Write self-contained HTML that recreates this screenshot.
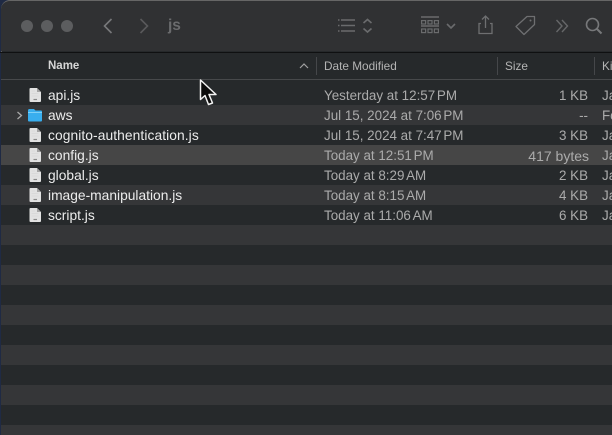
<!DOCTYPE html>
<html><head><meta charset="utf-8">
<style>
html,body{margin:0;padding:0;background:#2a2d3a;}
#w{position:relative;width:612px;height:435px;overflow:hidden;background:#1f2a44;font-family:"Liberation Sans",sans-serif;filter:blur(.3px);}
#win{position:absolute;left:1px;top:1px;width:640px;height:440px;border-radius:9px;overflow:hidden;background:#26292b;box-shadow:inset 0 0 0 1px #5a5a5c;}
#tb{position:absolute;left:0;top:0;right:0;height:51px;background:#303133;border-top:1px solid #666;box-sizing:border-box;}
#ln{position:absolute;left:0;right:0;top:51px;height:1px;background:#0f1011;}
.r{position:absolute;left:1px;width:640px;height:20px;}
.l{background:#353638;}
.s{background:#464646;}
.t{position:absolute;font-size:13.4px;line-height:20px;white-space:nowrap;margin-top:1px;}
.n{left:48px;color:#ececec;font-size:13.8px;}
.d{left:324px;color:#ababab;}
.d i{font-style:normal;margin-left:-2px;}
.z{right:24px;color:#ababab;text-align:right;}
.k{left:602px;color:#ababab;}
.h{position:absolute;top:56px;font-size:11.8px;line-height:20px;color:#b4b4b4;white-space:nowrap;}
.sep{position:absolute;top:57px;height:18px;width:1px;background:#45474a;}
svg{position:absolute;left:0;top:0;overflow:visible;}
</style></head><body>
<div id="w">
<div id="win"></div>
<div id="tb" style="left:1px;width:640px;position:absolute;border-radius:9px 0 0 0;"></div>
<div id="ln" style="position:absolute;top:52px;"></div>
<div style="position:absolute;left:1px;top:53px;width:640px;height:382px;background:#26292b;"></div>
<div style="position:absolute;left:1px;top:79px;width:640px;height:1px;background:#47494b;"></div>

<div class="r l" style="top:105px"></div>
<div class="r s" style="top:145px"></div>
<div class="r l" style="top:185px"></div>
<div class="r l" style="top:225px"></div>
<div class="r l" style="top:265px"></div>
<div class="r l" style="top:305px"></div>
<div class="r l" style="top:345px"></div>
<div class="r l" style="top:385px"></div>
<div class="r l" style="top:425px;height:10px"></div>

<div class="h" style="left:48px;font-weight:bold;font-size:11.5px;color:#d6d6d6;">Name</div>
<div class="h" style="left:324px;">Date Modified</div>
<div class="h" style="left:505px;">Size</div>
<div class="h" style="left:602px;">Kind</div>
<div class="sep" style="left:316px"></div>
<div class="sep" style="left:497px"></div>
<div class="sep" style="left:594px"></div>

<div class="t n" style="top:85px">api.js</div>
<div class="t n" style="top:105px">aws</div>
<div class="t n" style="top:125px;letter-spacing:.08px">cognito-authentication.js</div>
<div class="t n" style="top:145px">config.js</div>
<div class="t n" style="top:165px">global.js</div>
<div class="t n" style="top:185px">image-manipulation.js</div>
<div class="t n" style="top:205px">script.js</div>

<div class="t d" style="top:85px">Yesterday at 12:57 <i>PM</i></div>
<div class="t d" style="top:105px">Jul 15, 2024 at 7:06 <i>PM</i></div>
<div class="t d" style="top:125px">Jul 15, 2024 at 7:47 <i>PM</i></div>
<div class="t d" style="top:145px">Today at 12:51 <i>PM</i></div>
<div class="t d" style="top:165px">Today at 8:29 <i>AM</i></div>
<div class="t d" style="top:185px">Today at 8:15 <i>AM</i></div>
<div class="t d" style="top:205px">Today at 11:06 <i>AM</i></div>

<div class="t z" style="top:85px">1 KB</div>
<div class="t z" style="top:105px">--</div>
<div class="t z" style="top:125px">3 KB</div>
<div class="t z" style="top:145px;right:23px;font-size:14px">417 bytes</div>
<div class="t z" style="top:165px">2 KB</div>
<div class="t z" style="top:185px">4 KB</div>
<div class="t z" style="top:205px">6 KB</div>

<div class="t k" style="top:85px">Ja</div>
<div class="t k" style="top:105px">Fo</div>
<div class="t k" style="top:125px">Ja</div>
<div class="t k" style="top:145px">Ja</div>
<div class="t k" style="top:165px">Ja</div>
<div class="t k" style="top:185px">Ja</div>
<div class="t k" style="top:205px">Ja</div>

<div style="position:absolute;left:168px;top:16px;font-size:15.500px;line-height:20px;font-weight:bold;color:#6a6b6d;">js</div>

<svg width="612" height="435" viewBox="0 0 612 435" fill="none">
<defs><symbol id="doc" viewBox="0 0 12 14" overflow="visible"><path d="M.5 1Q.5 0 1.500 0H8L12 4V13Q12 14 11 14H1.500Q.5 14 .5 13Z" fill="#e2e2e2"/><path d="M8 0V4H12Z" fill="#a4a4a4"/><path d="M4.500 11.500H8" stroke="#8a8a8a" stroke-width="1.200"/><path d="M2.500 3H6M2.500 5.500H9.500M2.500 8H9.500" stroke="#cfcfcf" stroke-width=".6"/></symbol></defs>
<circle cx="27" cy="26" r="6" fill="#5c5d5f"/><circle cx="47" cy="26" r="6" fill="#5c5d5f"/><circle cx="67" cy="26" r="6" fill="#5c5d5f"/>
<path d="M111.500 19L104.500 26L111.500 33" stroke="#77787a" stroke-width="1.600"/>
<path d="M140.500 19L147.500 26L140.500 33" stroke="#59595b" stroke-width="1.600"/>
<g stroke="#6a6b6d" stroke-width="1.600">
<path d="M341 20H355M341 25.500H355M341 31H355" />
<path d="M338 20H339.500M338 25.500H339.500M338 31H339.500" />
<path d="M363.500 23L367.500 19.500L371.500 23M363.500 28.500L367.500 32L371.500 28.500"/>
</g>
<g stroke="#6a6b6d" stroke-width="1.200">
<path d="M421 17H439M421 26H439" stroke-width="1.400"/>
<rect x="421.600" y="20.600" width="4" height="3.400"/><rect x="428" y="20.600" width="4" height="3.400"/><rect x="434.400" y="20.600" width="4" height="3.400"/>
<rect x="421.600" y="29" width="4" height="3.600"/><rect x="428" y="29" width="4" height="3.600"/><rect x="434.400" y="29" width="4" height="3.600"/>
</g>
<path d="M447 24L451 28L455 24" stroke="#6a6b6d" stroke-width="1.600"/>
<g stroke="#6e6f71" stroke-width="1.300">
<path d="M481 23.500H479V33.500H492V23.500H490"/>
<path d="M485.500 28V16.500M482 19.500L485.500 16L489 19.500"/>
<path d="M516 26.500L527 16.500H534.500V24.500L524 34.500Z" stroke-linejoin="round"/>
<circle cx="530.500" cy="20.500" r="1" fill="#6e6f71" stroke="none"/>
</g>
<path d="M556.500 20L562 26L556.500 32M562 20L567.500 26L562 32" stroke="#666769" stroke-width="1.400"/>
<circle cx="592.500" cy="24.500" r="6" stroke="#77787a" stroke-width="1.600"/>
<path d="M597 29L601.500 33.500" stroke="#77787a" stroke-width="2"/>
<path d="M300 68L304 64L308 68" stroke="#a0a0a0" stroke-width="1.200"/>
<use href="#doc" x="29" y="88" width="12" height="14"/>
<use href="#doc" x="29" y="128" width="12" height="14"/>
<use href="#doc" x="29" y="148" width="12" height="14"/>
<use href="#doc" x="29" y="168" width="12" height="14"/>
<use href="#doc" x="29" y="188" width="12" height="14"/>
<use href="#doc" x="29" y="208" width="12" height="14"/>
<path d="M17.500 112L21.500 115.500L17.500 119" stroke="#a8a8a8" stroke-width="1.300"/>
<path d="M28 110.500Q28 109 29.500 109H34L35.500 110.500H41Q42 110.500 42 111.500V120.500Q42 121.500 41 121.500H29Q28 121.500 28 120.500Z" fill="#38aeee"/>
<path d="M28 112H42V113H28Z" fill="#7fd0f6"/>
<path d="M200.500 80V99.500L205 95.500L208.500 104.500L212.500 103L209 94.500H216Z" fill="#0b0b0b" stroke="#f2f2f2" stroke-width="1.500" stroke-linejoin="round"/>
</svg>
</div>
</body></html>
